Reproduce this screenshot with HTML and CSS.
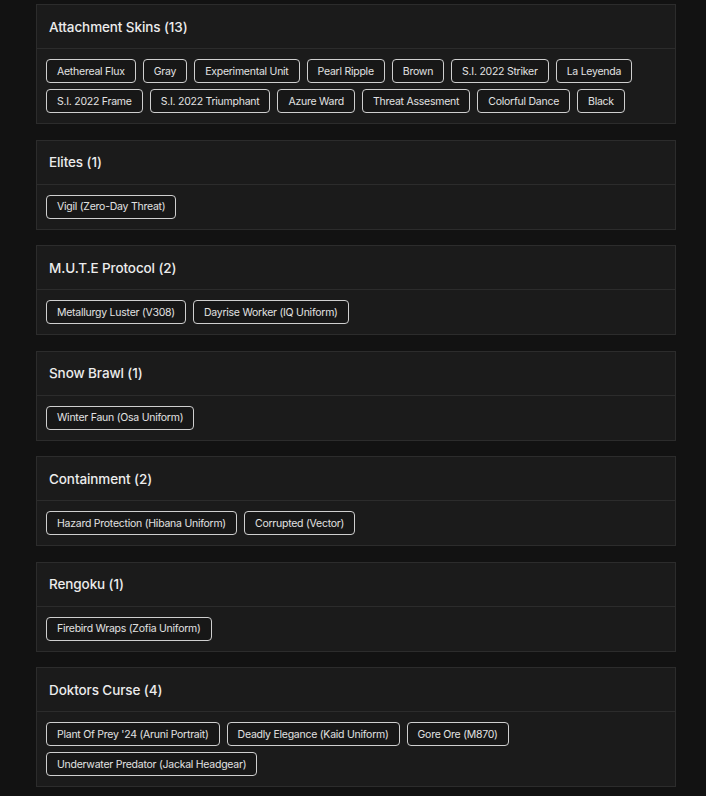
FILE: index.html
```html
<!DOCTYPE html>
<html lang="en">

<head>
  <meta charset="UTF-8" />
  <meta name="viewport" content="width=device-width, initial-scale=1.0" />
  <title>Bundles</title>
  <link rel="stylesheet" href="styles.css">
</head>

<body>
  <div class="bundles">
    <div class="bundle">
      <div class="bundle-head">Attachment Skins (13)</div>
      <ul class="bundle-items">
        <li>Aethereal Flux</li>
        <li>Gray</li>
        <li>Experimental Unit</li>
        <li>Pearl Ripple</li>
        <li>Brown</li>
        <li>S.I. 2022 Striker</li>
        <li>La Leyenda</li>
        <li>S.I. 2022 Frame</li>
        <li>S.I. 2022 Triumphant</li>
        <li>Azure Ward</li>
        <li>Threat Assesment</li>
        <li>Colorful Dance</li>
        <li>Black</li>
      </ul>
    </div>

    <div class="bundle">
      <div class="bundle-head">Elites (1)</div>
      <ul class="bundle-items">
        <li>Vigil (Zero-Day Threat)</li>
      </ul>
    </div>

    <div class="bundle">
      <div class="bundle-head">M.U.T.E Protocol (2)</div>
      <ul class="bundle-items">
        <li>Metallurgy Luster (V308)</li>
        <li>Dayrise Worker (IQ Uniform)</li>
      </ul>
    </div>

    <div class="bundle">
      <div class="bundle-head">Snow Brawl (1)</div>
      <ul class="bundle-items">
        <li>Winter Faun (Osa Uniform)</li>
      </ul>
    </div>

    <div class="bundle">
      <div class="bundle-head">Containment (2)</div>
      <ul class="bundle-items">
        <li>Hazard Protection (Hibana Uniform)</li>
        <li>Corrupted (Vector)</li>
      </ul>
    </div>

    <div class="bundle">
      <div class="bundle-head">Rengoku (1)</div>
      <ul class="bundle-items">
        <li>Firebird Wraps (Zofia Uniform)</li>
      </ul>
    </div>

    <div class="bundle">
      <div class="bundle-head">Doktors Curse (4)</div>
      <ul class="bundle-items">
        <li>Plant Of Prey '24 (Aruni Portrait)</li>
        <li>Deadly Elegance (Kaid Uniform)</li>
        <li>Gore Ore (M870)</li>
        <li>Underwater Predator (Jackal Headgear)</li>
      </ul>
    </div>
  </div>
</body>

</html>
```

FILE: styles.css
```css
* {
  box-sizing: border-box;
}

body {
  margin: 0;
  background: #121212;
  color: #e6e6e6;
  font-family: Inter, "Noto Sans", sans-serif;
}

.bundles {
  width: 640px;
  margin-left: 36px;
  padding: 4px 0 10px;
  display: flex;
  flex-direction: column;
  gap: 15.5px;
}

.bundle {
  background: #1b1b1b;
  border: 1px solid #2c2c2c;
}

.bundle-head {
  height: 44px;
  padding: 0 12px;
  display: flex;
  align-items: center;
  font-size: 13.5px;
  font-weight: 500;
  letter-spacing: -0.1px;
  color: #ececec;
  border-bottom: 1px solid #2c2c2c;
}

.bundle-items {
  margin: 0;
  padding: 10px 9px;
  list-style: none;
  display: flex;
  flex-wrap: wrap;
  gap: 6px 7px;
}

.bundle-items li {
  height: 24px;
  padding: 0 10px;
  display: flex;
  align-items: center;
  font-size: 10.5px;
  letter-spacing: -0.25px;
  color: #e2e2e2;
  background: #171717;
  border: 1px solid #cfcfcf;
  border-radius: 4px;
}
```
